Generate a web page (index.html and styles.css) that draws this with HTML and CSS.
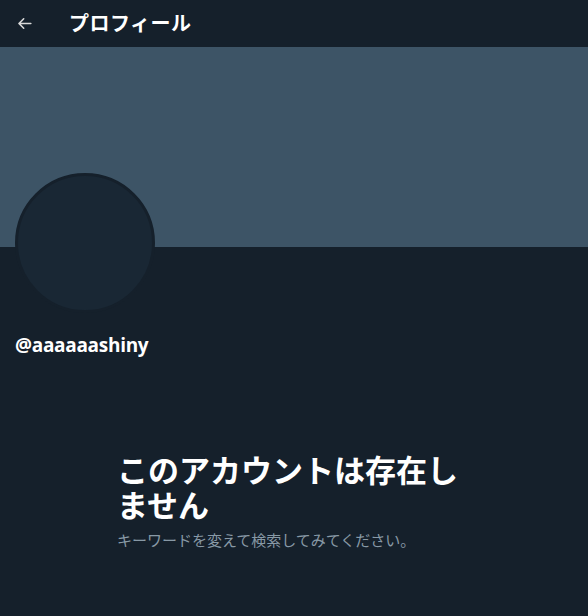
FILE: index.html
```html
<!DOCTYPE html>
<html lang="ja">
<head>
<meta charset="utf-8">
<link rel="stylesheet" href="styles.css">
</head>
<body>
<div class="page">
  <header class="topbar">
    <div class="back">
      <svg viewBox="0 0 24 24" width="19" height="19"><path d="M20 11H7.414l4.293-4.293a1 1 0 0 0-1.414-1.414l-6 6a1 1 0 0 0 0 1.414l6 6a1 1 0 0 0 1.414-1.414L7.414 13H20a1 1 0 1 0 0-2z" fill="#d9d9d9"/></svg>
    </div>
    <h1 class="title">プロフィール</h1>
  </header>
  <div class="banner"></div>
  <div class="profile">
    <div class="avatar"></div>
    <div class="handle">@aaaaaashiny</div>
  </div>
  <div class="empty">
    <h2 class="empty-title">このアカウントは存在しません</h2>
    <p class="empty-sub">キーワードを変えて検索してみてください。</p>
  </div>
</div>
</body>
</html>
```
FILE: styles.css
```css
html, body {
  margin: 0;
  padding: 0;
  background: #15202b;
}
body {
  font-family: "Noto Sans CJK JP", "Noto Sans", sans-serif;
  color: #ffffff;
}
.page {
  width: 588px;
  height: 616px;
  overflow: hidden;
  background: #15202b;
}
.topbar {
  height: 47px;
  display: flex;
  align-items: center;
  padding: 0 0 0 15px;
  box-sizing: border-box;
  border-bottom: 1px solid #15202b;
}
.back {
  width: 19px;
  height: 19px;
  display: flex;
  margin-top: 1px;
}
.title {
  margin: 0 0 0 35px;
  font-size: 20px;
  font-weight: 700;
  line-height: 24px;
  letter-spacing: 0.5px;
}
.banner {
  height: 200px;
  background: #3d5466;
}
.profile {
  padding: 0 15px;
  height: 160px;
}
.avatar {
  width: 134px;
  height: 134px;
  border-radius: 50%;
  background: #192734;
  border: 3px solid #15202b;
  margin-top: -74px;
}
.handle {
  margin-top: 20px;
  font-family: "Open Sans", "Liberation Sans", sans-serif;
  font-weight: 700;
  font-size: 19px;
  line-height: 24px;
  letter-spacing: -0.3px;
}
.empty {
  width: 354px;
  margin: 0 auto;
  padding: 118px 23px 0;
}
.empty-title {
  margin: 0;
  font-size: 31px;
  font-weight: 700;
  line-height: 35px;
}
.empty-sub {
  margin: 9px 0 0;
  font-size: 15px;
  line-height: 20px;
  color: #8899a6;
}
```
